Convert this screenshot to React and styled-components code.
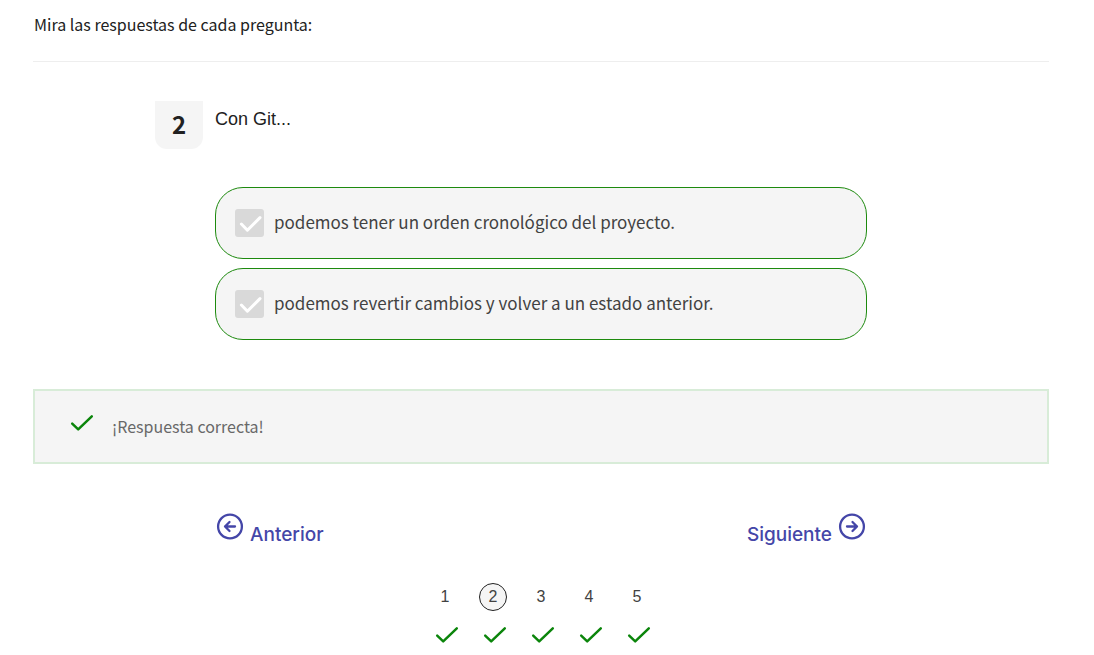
import React from "react";
import styled, { createGlobalStyle } from "styled-components";

const GlobalStyle = createGlobalStyle`
  *, *::before, *::after { box-sizing: border-box; }
  body {
    margin: 0;
    background: #fff;
    color: #212121;
    font-family: "Noto Sans CJK JP", "Noto Sans", sans-serif;
  }
`;

const Page = styled.main`
  padding: 12px 45px 0 33px;
`;

const Intro = styled.p`
  margin: 0;
  padding: 0 0 24px 1px;
  border-bottom: 1px solid #eeeeee;
  font-size: 16px;
  line-height: 25px;
`;

const Question = styled.fieldset`
  max-width: 772px;
  min-width: 0;
  margin: 39px auto 0;
  padding: 0;
  border: 0;
`;

const Heading = styled.div`
  display: flex;
  align-items: flex-start;
  gap: 12px;
`;

const NumberBadge = styled.span`
  width: 48px;
  height: 48px;
  border-radius: 0 0 12px 12px;
  background: #f5f5f5;
  font-size: 24px;
  font-weight: 700;
  line-height: 46px;
  text-align: center;
`;

const Prompt = styled.h1`
  margin: 0;
  padding-top: 6px;
  font: 400 18px/24px "Liberation Sans", Arial, sans-serif;
`;

const Options = styled.div`
  display: grid;
  gap: 9px;
  margin: 38px 60px 0;
`;

const Option = styled.label`
  display: flex;
  align-items: center;
  gap: 10px;
  min-height: 72px;
  padding: 0 19px;
  border: 1px solid #1d8a0e;
  border-radius: 28px;
  background: #f5f5f5;
  color: #424242;
  font-size: 17px;
  line-height: 28px;
  > span:last-child { padding-bottom: 2px; }
`;

const CheckboxFrame = styled.span`
  display: grid;
  flex: none;
  place-items: center;
  > * { grid-area: 1 / 1; }
  > svg { pointer-events: none; }
`;

const Checkbox = styled.input`
  appearance: none;
  width: 29px;
  height: 28px;
  margin: 0;
  border-radius: 3px;
  background: #d9d9d9;
`;

const Feedback = styled.section`
  display: flex;
  align-items: center;
  gap: 18px;
  min-height: 75px;
  margin-top: 49px;
  padding: 0 35px 2px;
  border: 2px solid #d8ecd8;
  background: #f5f5f5;
  color: #686868;
  font-size: 16px;
  line-height: 24px;
  > svg { margin-bottom: 6px; }
`;

const Navigation = styled.nav`
  display: flex;
  justify-content: space-between;
  max-width: 652px;
  margin: 48px auto 0;
  padding: 0 1px;
`;

const NavLink = styled.a`
  display: flex;
  align-items: flex-start;
  gap: 6px;
  color: #4446a8;
  font: 500 19px/24px Inter, sans-serif;
  text-decoration: none;
  > span { padding-top: 11px; }
`;

const Pagination = styled.ol`
  display: flex;
  justify-content: center;
  margin: 36px 0 0;
  padding: 0;
  list-style: none;
`;

const Step = styled.li`
  display: grid;
  justify-items: center;
  gap: 15px;
  width: 48px;
  > svg { margin-left: 4px; }
`;

const StepLink = styled.a`
  display: grid;
  place-items: center;
  width: 28px;
  height: 28px;
  border: 1px solid ${({ $current }) => ($current ? "#212121" : "transparent")};
  border-radius: 50%;
  background: ${({ $current }) => ($current ? "#f5f5f5" : "transparent")};
  color: #424242;
  font: 400 16px/24px "Liberation Sans", Arial, sans-serif;
  text-decoration: none;
`;

function CheckIcon({ color = "#0b850b" }) {
  return (
    <svg width="24" height="18" viewBox="0 0 24 18" fill="none" aria-hidden="true">
      <path d="M2.2 9.7 8.2 15.4 21.8 2.4" stroke={color} strokeWidth="2.5" strokeLinecap="round" strokeLinejoin="round" />
    </svg>
  );
}

function BoxCheckIcon() {
  return (
    <svg width="29" height="28" viewBox="0 0 29 28" fill="none" aria-hidden="true">
      <path d="M6.4 15 12.4 21.2 25 8.6" stroke="#fff" strokeWidth="3" strokeLinecap="round" strokeLinejoin="round" />
    </svg>
  );
}

function ArrowIcon({ right = false }) {
  return (
    <svg width="28" height="28" viewBox="0 0 28 28" fill="none" stroke="currentColor" strokeWidth="2.3" strokeLinecap="round" strokeLinejoin="round" aria-hidden="true">
      <circle cx="14" cy="14.5" r="11.9" />
      <path d={right ? "M9 14.5h10M14.5 10l4.5 4.5-4.5 4.5" : "M19 14.5H9M13.5 10 9 14.5l4.5 4.5"} />
    </svg>
  );
}

const answers = [
  "podemos tener un orden cronológico del proyecto.",
  "podemos revertir cambios y volver a un estado anterior.",
];

export default function App() {
  return (
    <>
      <GlobalStyle />
      <Page>
        <Intro>Mira las respuestas de cada pregunta:</Intro>
        <Question aria-labelledby="prompt">
          <Heading>
            <NumberBadge>2</NumberBadge>
            <Prompt id="prompt">Con Git...</Prompt>
          </Heading>
          <Options>
            {answers.map((answer, i) => (
              <Option key={answer} htmlFor={`answer-${i}`}>
                <CheckboxFrame>
                  <Checkbox id={`answer-${i}`} type="checkbox" defaultChecked disabled />
                  <BoxCheckIcon />
                </CheckboxFrame>
                <span>{answer}</span>
              </Option>
            ))}
          </Options>
        </Question>
        <Feedback>
          <CheckIcon />
          <span>¡Respuesta correcta!</span>
        </Feedback>
        <Navigation>
          <NavLink href="#1">
            <ArrowIcon />
            <span>Anterior</span>
          </NavLink>
          <NavLink href="#3">
            <span>Siguiente</span>
            <ArrowIcon right />
          </NavLink>
        </Navigation>
        <Pagination>
          {[1, 2, 3, 4, 5].map((n) => (
            <Step key={n}>
              <StepLink href={`#${n}`} $current={n === 2} aria-current={n === 2 ? "step" : undefined}>
                {n}
              </StepLink>
              <CheckIcon />
            </Step>
          ))}
        </Pagination>
      </Page>
    </>
  );
}
